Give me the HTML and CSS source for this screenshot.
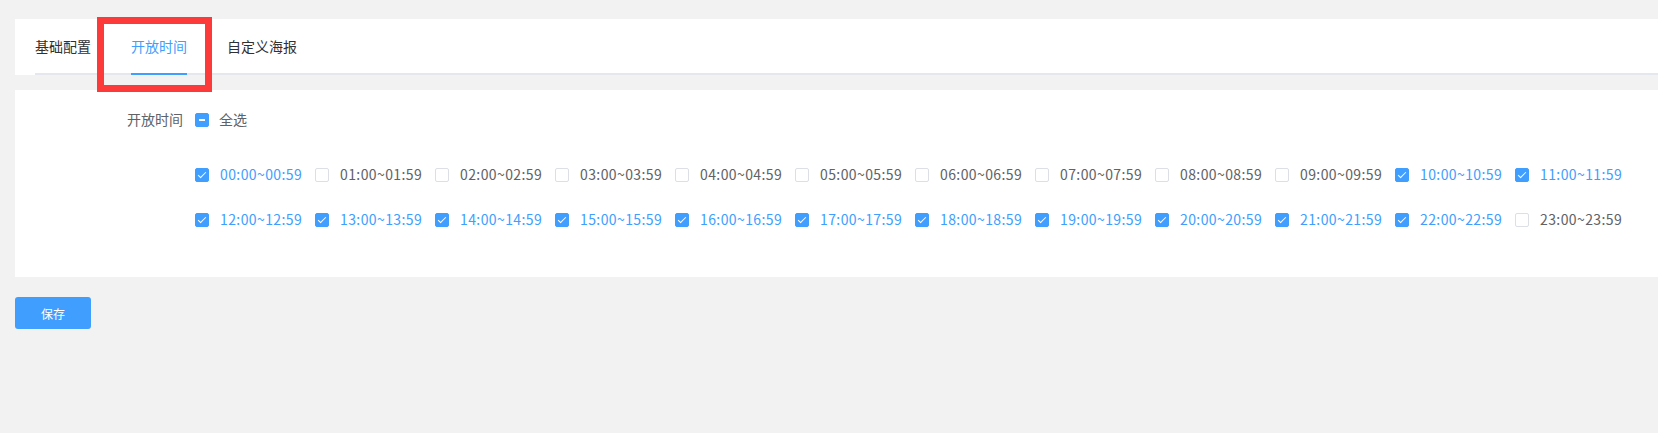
FILE: index.html
```html
<!DOCTYPE html>
<html lang="zh-CN">
<head>
<meta charset="utf-8">
<title>开放时间</title>
<link rel="stylesheet" href="styles.css">
</head>
<body>
<div class="page">
  <div class="tabs-card">
    <div class="tabs-nav">
      <div class="tab first">基础配置</div>
      <div class="tab active">开放时间</div>
      <div class="tab">自定义海报</div>
    </div>
  </div>

  <div class="form-card">
    <div class="form-item">
      <div class="form-label">开放时间</div>
      <label class="cb indeterminate"><span class="box"></span><span class="txt">全选</span></label>
    </div>
    <div class="group">
      <label class="cb checked"><span class="box"></span><span class="txt">00:00~00:59</span></label>
      <label class="cb"><span class="box"></span><span class="txt">01:00~01:59</span></label>
      <label class="cb"><span class="box"></span><span class="txt">02:00~02:59</span></label>
      <label class="cb"><span class="box"></span><span class="txt">03:00~03:59</span></label>
      <label class="cb"><span class="box"></span><span class="txt">04:00~04:59</span></label>
      <label class="cb"><span class="box"></span><span class="txt">05:00~05:59</span></label>
      <label class="cb"><span class="box"></span><span class="txt">06:00~06:59</span></label>
      <label class="cb"><span class="box"></span><span class="txt">07:00~07:59</span></label>
      <label class="cb"><span class="box"></span><span class="txt">08:00~08:59</span></label>
      <label class="cb"><span class="box"></span><span class="txt">09:00~09:59</span></label>
      <label class="cb checked"><span class="box"></span><span class="txt">10:00~10:59</span></label>
      <label class="cb checked"><span class="box"></span><span class="txt">11:00~11:59</span></label>
      <label class="cb checked"><span class="box"></span><span class="txt">12:00~12:59</span></label>
      <label class="cb checked"><span class="box"></span><span class="txt">13:00~13:59</span></label>
      <label class="cb checked"><span class="box"></span><span class="txt">14:00~14:59</span></label>
      <label class="cb checked"><span class="box"></span><span class="txt">15:00~15:59</span></label>
      <label class="cb checked"><span class="box"></span><span class="txt">16:00~16:59</span></label>
      <label class="cb checked"><span class="box"></span><span class="txt">17:00~17:59</span></label>
      <label class="cb checked"><span class="box"></span><span class="txt">18:00~18:59</span></label>
      <label class="cb checked"><span class="box"></span><span class="txt">19:00~19:59</span></label>
      <label class="cb checked"><span class="box"></span><span class="txt">20:00~20:59</span></label>
      <label class="cb checked"><span class="box"></span><span class="txt">21:00~21:59</span></label>
      <label class="cb checked"><span class="box"></span><span class="txt">22:00~22:59</span></label>
      <label class="cb"><span class="box"></span><span class="txt">23:00~23:59</span></label>
    </div>
  </div>

  <button class="btn-save">保存</button>

  <div class="highlight"></div>
</div>
</body>
</html>
```

FILE: styles.css
```css
* { box-sizing: border-box; }

html, body {
  margin: 0;
  padding: 0;
  background: #f2f2f2;
}

body {
  font-family: "Noto Sans CJK SC", "Microsoft YaHei", sans-serif;
  font-size: 14px;
  color: #606266;
  overflow: hidden;
}

.page {
  position: relative;
  padding: 19px 0 0 15px;
  min-height: 433px;
}

.tabs-card {
  background: #fff;
  padding-left: 20px;
}

.tabs-nav {
  display: flex;
  height: 56px;
  padding-top: 8px;
  border-bottom: 2px solid #e4e7ed;
}

.tab {
  height: 48px;
  line-height: 38px;
  padding: 0 20px;
  font-size: 14px;
  color: #303133;
}

.tab.first { padding-left: 0; }

.tab.active {
  color: #409eff;
  padding: 0;
  margin: 0 20px -2px;
  height: 48px;
  border-bottom: 2px solid #409eff;
}

.form-card {
  margin-top: 15px;
  background: #fff;
  height: 187px;
  padding-top: 10px;
}

.form-item {
  display: flex;
  align-items: center;
  height: 40px;
}

.form-label {
  width: 180px;
  padding-right: 12px;
  padding-bottom: 2px;
  text-align: right;
  color: #606266;
  line-height: 38px;
}

.cb {
  display: flex;
  align-items: center;
  height: 40px;
  white-space: nowrap;
  color: #606266;
}

.cb .box {
  position: relative;
  width: 14px;
  height: 14px;
  border: 1px solid #dcdfe6;
  border-radius: 2px;
  background: #fff;
  flex: none;
}

.cb .txt {
  padding-left: 11px;
  padding-bottom: 2px;
  line-height: 20px;
  letter-spacing: 0.4px;
}

.cb.checked .box,
.cb.indeterminate .box {
  background: #409eff;
  border-color: #409eff;
}

.cb.checked .txt { color: #409eff; }
.cb.indeterminate .txt { padding-left: 10px; letter-spacing: 0; }

.cb.checked .box::after {
  content: "";
  position: absolute;
  left: 4px;
  top: 1px;
  width: 3px;
  height: 7px;
  border: 1px solid #fff;
  border-top: 0;
  border-left: 0;
  transform: rotate(45deg);
}

.cb.indeterminate .box::before {
  content: "";
  position: absolute;
  left: 3px;
  top: 5px;
  width: 6px;
  height: 2px;
  background: #fff;
}

.group {
  margin: 15px 0 0 180px;
  display: grid;
  grid-template-columns: repeat(12, 120px);
  row-gap: 5px;
}

.btn-save {
  display: block;
  margin-top: 20px;
  width: 76px;
  height: 32px;
  border: 0;
  border-radius: 3px;
  background: #409eff;
  color: #fff;
  font-family: "Noto Sans CJK SC", "Microsoft YaHei", sans-serif;
  font-size: 12px;
  padding: 0;
}

.highlight {
  position: absolute;
  left: 97px;
  top: 17px;
  width: 115px;
  height: 75px;
  border: 7px solid #fd3a3a;
}
```
